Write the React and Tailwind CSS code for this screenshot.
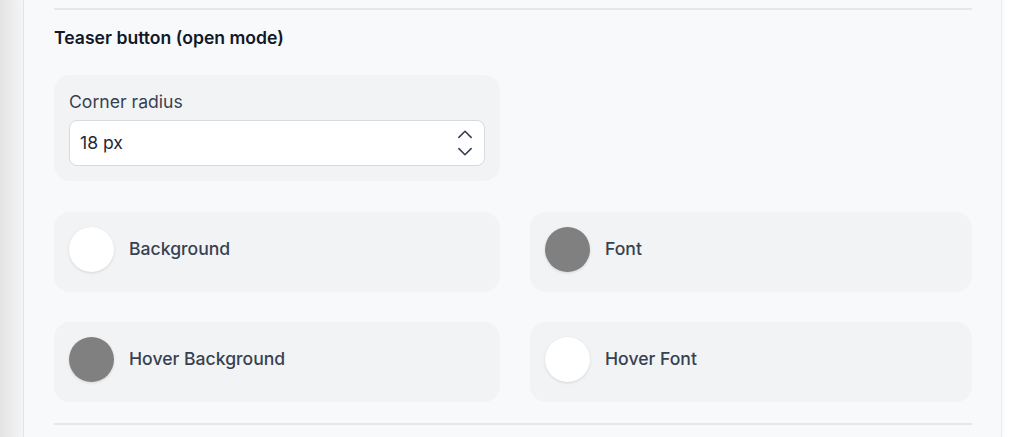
import React from "react";

function Swatch({ color, label }) {
  return (
    <div className="flex h-20 items-center gap-[15px] rounded-2xl bg-[#f2f3f5] px-[15px] pb-[5px]">
      <div
        className={`h-[45px] w-[45px] shrink-0 rounded-full shadow-[0_1px_3px_rgba(0,0,0,0.12)] ${color}`}
      />
      <span className="text-[17.6px] font-medium text-[#374151]">{label}</span>
    </div>
  );
}

export default function App() {
  return (
    <div className="flex h-[437px] w-[1026px] overflow-hidden bg-white font-['Inter',sans-serif]">
      <div className="h-full w-6 shrink-0 border-r border-[#e6e6e6] bg-gradient-to-r from-[#e4e4e4] to-[#f5f5f5]" />
      <div className="h-full w-[978px] shrink-0 border-r border-[#ebecee] bg-[#f8f9fb] px-[30px] pt-2 shadow-[1px_0_4px_rgba(0,0,0,0.04)]">
        <div className="h-[2px] w-[918px] bg-[#e5e7eb]" />
        <h2 className="mt-[15px] text-[17.6px] font-semibold leading-[25px] text-[#111827]">
          Teaser button (open mode)
        </h2>
        <div className="mt-[25px] grid grid-cols-[446px_442px] gap-x-[30px]">
          <div className="rounded-2xl bg-[#f2f3f5] p-[15px]">
            <div className="text-[17.6px] leading-[23px] text-[#374151]">Corner radius</div>
            <div className="mt-[7px] flex h-[46px] items-center justify-between rounded-lg border border-[#d7dae0] bg-white pl-[10px] pr-[12px]">
              <span className="text-[17.6px] text-[#1f2937]">18 px</span>
              <svg width="14" height="26" viewBox="0 0 14 26" fill="none" stroke="#374151" strokeWidth="1.6" strokeLinecap="round" strokeLinejoin="round">
                <path d="M0.9 7.4 L7 1.3 L13.1 7.4" />
                <path d="M0.9 18.6 L7 24.7 L13.1 18.6" />
              </svg>
            </div>
          </div>
          <div />
        </div>
        <div className="mt-[31px] grid grid-cols-[446px_442px] gap-x-[30px] gap-y-[30px]">
          <Swatch color="bg-white" label="Background" />
          <Swatch color="bg-[#808080]" label="Font" />
          <Swatch color="bg-[#808080]" label="Hover Background" />
          <Swatch color="bg-white" label="Hover Font" />
        </div>
        <div className="mt-[21px] h-[2px] w-[918px] bg-[#e5e7eb]" />
      </div>
    </div>
  );
}
